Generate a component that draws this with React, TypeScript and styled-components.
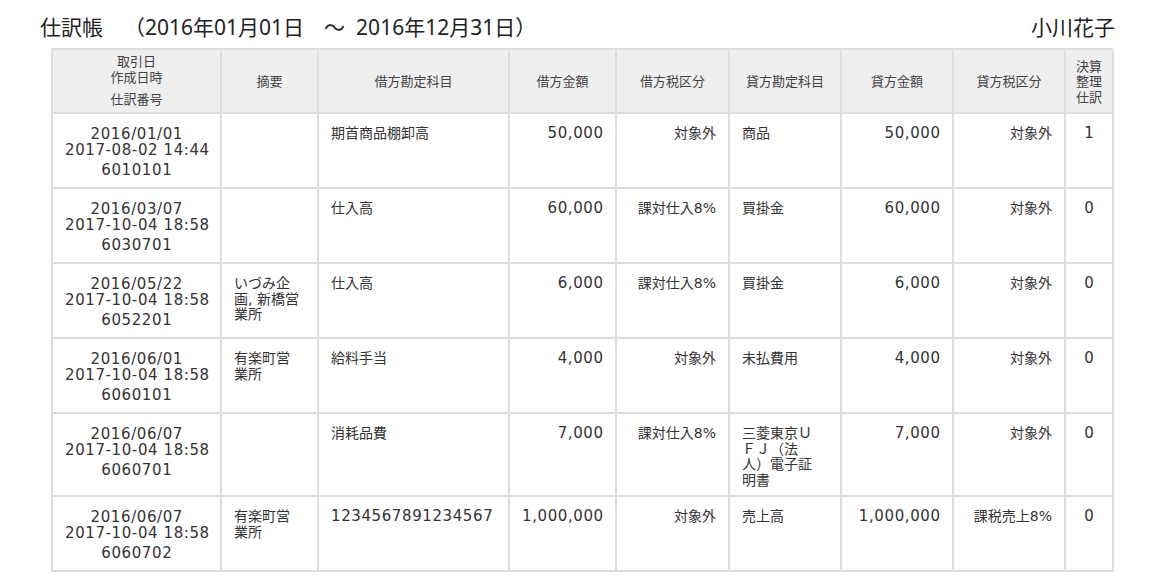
import React from "react";
import styled, { createGlobalStyle } from "styled-components";

const GlobalStyle = createGlobalStyle`
  *, *::before, *::after { box-sizing: border-box; }
  body {
    margin: 0;
    background: #fff;
    font-family: "DejaVu Sans", "Noto Sans CJK JP", sans-serif;
    color: #333;
    text-spacing-trim: space-all;
  }
`;

const Page = styled.div`
  padding: 13px 0 0 40px;
  width: 1115px;
`;

const TitleBar = styled.header`
  display: flex;
  justify-content: space-between;
  align-items: center;
  height: 28px;
  margin-bottom: 7px;
  font-family: "Noto Sans", "Noto Sans CJK JP", sans-serif;
  font-size: 21px;
  line-height: 28px;
  color: #222;
  text-spacing-trim: space-all;
`;

const Title = styled.h1`
  margin: 0;
  font-size: inherit;
  font-weight: normal;
  white-space: nowrap;
`;

const RangeSep = styled.span`
  padding: 0 11px 0 20px;
`;

const Owner = styled.div``;

const Table = styled.table`
  margin-left: 11px;
  width: 1063px;
  table-layout: fixed;
  border-collapse: separate;
  border-spacing: 0;
  border-top: 2px solid #dddddd;
  border-left: 2px solid #dddddd;
  border-top-right-radius: 3px;
  font-size: 14px;
  text-spacing-trim: space-all;
`;

const HeadCell = styled.th<{ $tight?: boolean }>`
  background: #efefef;
  border-right: 2px solid #dddddd;
  border-bottom: 2px solid #dddddd;
  padding: 3px ${(p) => (p.$tight ? 4 : 6)}px;
  height: 63px;
  vertical-align: middle;
  text-align: center;
  font-family: "Noto Sans CJK JP", sans-serif;
  font-size: 13px;
  font-weight: normal;
  line-height: 15.5px;
  color: #444;
  &:last-child { border-top-right-radius: 3px; }
`;

const HeadLines = styled.div`
  line-height: 15.5px;
`;

const HeadSub = styled.div`
  margin-top: 5px;
  line-height: 20px;
`;

type Align = "left" | "right" | "center";

const Cell = styled.td<{ $align: Align }>`
  border-right: 2px solid #dddddd;
  border-bottom: 2px solid #dddddd;
  padding: 12px ${(p) => (p.$align === "left" ? 16 : 12)}px 7px 12px;
  vertical-align: top;
  text-align: ${(p) => p.$align};
  line-height: 15.5px;
  color: #333;
  word-break: normal;
  overflow-wrap: normal;
  text-spacing-trim: space-all;
`;

const DateLines = styled.div`
  line-height: 16px;
`;

const SlipNo = styled.div`
  margin-top: 2px;
  line-height: 20px;
`;

const Num = styled.span`
  font-family: "DejaVu Sans", sans-serif;
  font-size: 15px;
  letter-spacing: 0.6px;
  margin-right: -0.6px;
  white-space: nowrap;
`;

type Entry = {
  date: string;
  created: string;
  no: string;
  memo: string;
  dr: string;
  drAmt: string;
  drTax: string;
  cr: string;
  crAmt: string;
  crTax: string;
  adj: string;
};

const entries: Entry[] = [
  { date: "2016/01/01", created: "2017-08-02 14:44", no: "6010101", memo: "", dr: "期首商品棚卸高", drAmt: "50,000", drTax: "対象外", cr: "商品", crAmt: "50,000", crTax: "対象外", adj: "1" },
  { date: "2016/03/07", created: "2017-10-04 18:58", no: "6030701", memo: "", dr: "仕入高", drAmt: "60,000", drTax: "課対仕入8%", cr: "買掛金", crAmt: "60,000", crTax: "対象外", adj: "0" },
  { date: "2016/05/22", created: "2017-10-04 18:58", no: "6052201", memo: "いづみ企画, 新橋営業所", dr: "仕入高", drAmt: "6,000", drTax: "課対仕入8%", cr: "買掛金", crAmt: "6,000", crTax: "対象外", adj: "0" },
  { date: "2016/06/01", created: "2017-10-04 18:58", no: "6060101", memo: "有楽町営業所", dr: "給料手当", drAmt: "4,000", drTax: "対象外", cr: "未払費用", crAmt: "4,000", crTax: "対象外", adj: "0" },
  { date: "2016/06/07", created: "2017-10-04 18:58", no: "6060701", memo: "", dr: "消耗品費", drAmt: "7,000", drTax: "課対仕入8%", cr: "三菱東京ＵＦＪ（法人）電子証明書", crAmt: "7,000", crTax: "対象外", adj: "0" },
  { date: "2016/06/07", created: "2017-10-04 18:58", no: "6060702", memo: "有楽町営業所", dr: "1234567891234567", drAmt: "1,000,000", drTax: "対象外", cr: "売上高", crAmt: "1,000,000", crTax: "課税売上8%", adj: "0" },
];

const columns = [169, 97, 191, 107, 113, 112, 112, 112, 48];

const isNumeric = (s: string) => /^[0-9,\-/: ]+$/.test(s);

const T = ({ v }: { v: string }) => (isNumeric(v) ? <Num>{v}</Num> : <>{v}</>);

export default function App() {
  return (
    <>
      <GlobalStyle />
      <Page>
        <TitleBar>
          <Title>
            仕訳帳　（2016年01月01日<RangeSep>〜</RangeSep>2016年12月31日）
          </Title>
          <Owner>小川花子</Owner>
        </TitleBar>
        <Table>
          <colgroup>
            {columns.map((w, i) => (
              <col key={i} style={{ width: w }} />
            ))}
          </colgroup>
          <thead>
            <tr>
              <HeadCell>
                <HeadLines>
                  取引日
                  <br />
                  作成日時
                </HeadLines>
                <HeadSub>仕訳番号</HeadSub>
              </HeadCell>
              <HeadCell>摘要</HeadCell>
              <HeadCell>借方勘定科目</HeadCell>
              <HeadCell>借方金額</HeadCell>
              <HeadCell>借方税区分</HeadCell>
              <HeadCell>貸方勘定科目</HeadCell>
              <HeadCell>貸方金額</HeadCell>
              <HeadCell>貸方税区分</HeadCell>
              <HeadCell $tight>決算整理仕訳</HeadCell>
            </tr>
          </thead>
          <tbody>
            {entries.map((e) => (
              <tr key={e.no}>
                <Cell $align="center">
                  <DateLines>
                    <Num>{e.date}</Num>
                    <br />
                    <Num>{e.created}</Num>
                  </DateLines>
                  <SlipNo>
                    <Num>{e.no}</Num>
                  </SlipNo>
                </Cell>
                <Cell $align="left">{e.memo}</Cell>
                <Cell $align="left">
                  <T v={e.dr} />
                </Cell>
                <Cell $align="right">
                  <T v={e.drAmt} />
                </Cell>
                <Cell $align="right">{e.drTax}</Cell>
                <Cell $align="left">{e.cr}</Cell>
                <Cell $align="right">
                  <T v={e.crAmt} />
                </Cell>
                <Cell $align="right">{e.crTax}</Cell>
                <Cell $align="center">
                  <T v={e.adj} />
                </Cell>
              </tr>
            ))}
          </tbody>
        </Table>
      </Page>
    </>
  );
}
